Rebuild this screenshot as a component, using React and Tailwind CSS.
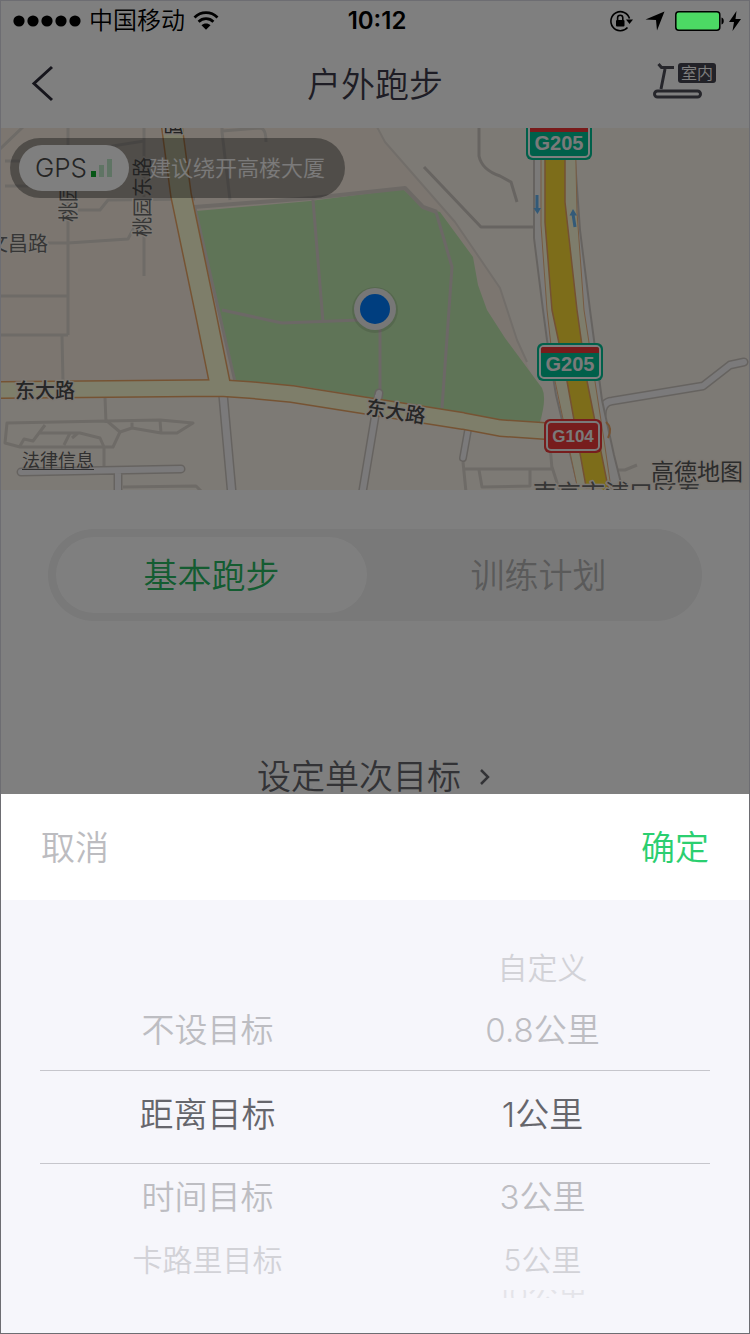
import React, { useState } from "react";

const MODES = ["基本跑步", "训练计划"];

// one entry per wheel slot, the slot's look comes from its position
const GOALS = ["", "不设目标", "距离目标", "时间目标", "卡路里目标", ""];
const VALUES = ["自定义", "0.8公里", "1公里", "3公里", "5公里", "10公里"];

const SLOTS = [
  "h-11 text-[30px] text-[#d2d2d7]",
  "h-20 text-[33px] text-[#bdbdc2]",
  "h-[94px] border-y border-[#c6c6cc] pb-1 text-[34px] text-[#66666c]",
  "h-[66px] text-[33px] text-[#bdbdc2]",
  "h-[60px] text-[30px] text-[#d2d2d7]",
  "h-2 text-[30px] text-[#e4e4e9]",
];

function StatusBar() {
  return (
    <div className="relative z-10 grid h-10 grid-cols-3 items-center pr-2 pl-3 text-black">
      <div className="flex items-center gap-2">
        <svg className="h-3 w-[68px]" viewBox="0 0 68 12">
          {[6, 20, 34, 48, 62].map((cx) => (
            <circle key={cx} cx={cx} cy="6" r="5.6" />
          ))}
        </svg>
        <span className="text-[24px] leading-none">中国移动</span>
        <svg className="h-5 w-[26px]" viewBox="0 0 26 20" fill="none" stroke="currentColor" strokeWidth="2.8">
          <path d="M1.500 6.500C8 .1 18 .1 24.500 6.500M5.600 10.700c4.200-4 10.600-4 14.800 0" />
          <path d="M8.500 14.300c2.400-2.400 6.600-2.400 9 0L13 18.800z" fill="currentColor" stroke="none" />
        </svg>
      </div>
      <div className="text-center text-[24px] leading-none font-semibold">10:12</div>
      <div className="flex items-center justify-end">
        <svg className="mr-3 h-6 w-6" viewBox="0 0 24 24" fill="none" stroke="currentColor" strokeWidth="1.6">
          <path d="M20.500 9.500A9.500 9.500 0 1 0 18.500 18.500" />
          <path d="M17 10.500h7L20.500 15z" fill="currentColor" stroke="none" />
          <rect x="7" y="11" width="8.500" height="6.500" rx="1" fill="currentColor" stroke="none" />
          <path d="M8.600 11V8.800a2.600 2.600 0 0 1 5.200 0V11" />
        </svg>
        <svg className="mr-2.5 h-5 w-5" viewBox="0 0 20 20" fill="currentColor">
          <path d="M19.500 .5 12 19.500l-1-10.500L.5 8.500z" />
        </svg>
        <svg className="h-5 w-[50px]" viewBox="0 0 50 20">
          <rect x=".8" y=".8" width="44" height="18.400" rx="3" fill="#4cd964" stroke="#000" strokeWidth="1.500" />
          <path d="M46.500 6.500c3 .6 3 6.400 0 7z" />
        </svg>
        <svg className="ml-1 h-5 w-3" viewBox="0 0 12 20" fill="currentColor">
          <path d="M7.500 0 0 11h5L3.500 20 12 8H6.500z" />
        </svg>
      </div>
    </div>
  );
}

function NavBar() {
  return (
    <header className="grid h-[87px] grid-cols-3 items-center px-6">
      <button type="button" aria-label="返回" className="justify-self-start pb-1">
        <svg className="h-10 w-10" viewBox="0 0 40 40" fill="none" stroke="#2c2b38" strokeWidth="3">
          <path d="M27 4 9 20.500 27 37" />
        </svg>
      </button>
      <h1 className="text-center text-[34px] leading-none text-[#3c3a4a]">户外跑步</h1>
      <button type="button" className="justify-self-end pr-2 pb-2">
        <svg className="h-9 w-16" viewBox="0 0 64 36">
          <g fill="none" stroke="#4c4c57" strokeWidth="3">
            <path d="M5.500 1 8.500 4.500H21M12 6 8 26" />
            <rect x="1.500" y="28" width="46" height="6" rx="3" />
          </g>
          <rect x="25" y="0" width="38" height="20" rx="3" fill="#444450" />
          <text x="28" y="16" className="text-[16px]" fill="#fff">室内</text>
        </svg>
      </button>
    </header>
  );
}

function G205({ x, y }) {
  return (
    <g transform={`translate(${x} ${y})`}>
      <rect width="66" height="38" rx="6" fill="#00c094" />
      <rect x="3" y="3" width="60" height="32" rx="4" fill="none" stroke="#fff" strokeWidth="2" />
      <path d="M4 10V6q0-2 2-2h54q2 0 2 2v4z" fill="#f03636" />
      <text x="33" y="28" textAnchor="middle" className="text-[20px] font-bold" fill="#f4f4f4">G205</text>
    </g>
  );
}

function Street({ d, w }) {
  return (
    <>
      <path d={d} stroke="#cdc7c1" strokeWidth={w + 3} strokeLinecap="round" />
      <path d={d} stroke="#f6f5f6" strokeWidth={w} strokeLinecap="round" />
    </>
  );
}

function MapView() {
  const northRoad = "M171 120 181 195 205 310 221 389";
  const eastRoad = "M-5 390 220 388 250 390 292 394 368 406 463 421 500 428 545 431 602 431";
  return (
    <svg
      className="block h-full w-full font-['Liberation_Sans','Noto_Sans_CJK_SC',sans-serif] font-normal"
      viewBox="1 128 748 362"
      preserveAspectRatio="xMidYMid slice"
      fill="none"
      strokeLinejoin="round"
    >
      <path d="M0 120h760v380H0z" fill="#f8ede1" />
      <path d="M377 120v10l8 12 70 80 45 66 17 52 25 60V425l-10 75h230V120z" fill="#fbf4ea" />
      <path d="M377 127l8 15 70 80 45 66 17 52 10 22" stroke="#e4ddd4" strokeWidth="2" />
      <path d="M0 396h220l70 4 170 28 90 12v60H0z" fill="#fbf4ea" />

      <g stroke="#dcd6ce" strokeWidth="3">
        <path d="M0 149 23 127M68 120V335M0 296H68M0 335H68M62 336l1 46M144 120V276M105 397l1 26" />
        <path d="M5 161H80M5 186H70M78 210H100L108 200 195 199M48 243H68L128 239 136 224" />
        <path d="M222 120V132L230 200M222 131 260 128Q266 128 266 142M100 148 144 141" />
        <path d="M7 423 107 421 120 432 113 447H20L5 443zM45 425 33 441 24 439 20 446M38 433H80L100 438 104 447V467M70 433 64 445M72 438 78 433" />
        <path d="M107 421 160 420 193 423 177 433 161 433 132 428 120 432M132 421V428M160 420 161 433" />
        <path d="M123 487 196 486 202 492M463 462 466 492M463 469H552L550 445M552 467 560 492M479 470 482 487 530 486V470" />
        <path d="M424 167 481 227H534M479 120V156Q482 170 500 176L511 182 517 202" stroke="#cfc9c2" />
        <path d="M615 470H625L637 465" />
      </g>

      <path
        d="M196 211 310 201 403 189 423 207 440 212 473 257 478 285 487 310 505 338 542 388Q547 398 540 422L500 420 373 398 300 386 235 382z"
        fill="#bfe8ae"
      />
      <path d="M194 207 312 198 405 188 423 207 437 212" stroke="#dad3cb" strokeWidth="4" />
      <path d="M195 208 235 382" stroke="#dbd3cd" strokeWidth="3" />
      <path d="M313 200 323 322M222 310 282 323 360 320M436 212 452 267 442 408M380 320V392" stroke="#d8d0cc" strokeWidth="3" />

      <Street d="M223 394 232 495" w={7} />
      <Street d="M379 393 362 495" w={6} />
      <Street d="M468 430 463 458" w={5} />
      <Street d="M21 472 181 469M118 474V495" w={6} />

      <path d={eastRoad} stroke="#eca766" strokeWidth="18" />
      <path d={northRoad} stroke="#eca766" strokeWidth="22" />
      <path d={eastRoad} stroke="#fcfcd4" strokeWidth="15" />
      <path d={northRoad} stroke="#fcfcd4" strokeWidth="19" />
      <path d="M376 411 378 395" stroke="#f6f5f6" strokeWidth="6" />

      <Street d="M602 415Q602 402 612 401L703 386 730 365 744 362" w={6} />
      <path
        d="M534 120V238L543 310 547 340 556 395 580 495H624L614 455 602 400 590 310 580 230 575 160V120z"
        fill="#f6f4f2"
        stroke="#cdc7c1"
        strokeWidth="2"
      />
      <path d="M541 120V225L547 310 555 381 579 495H612L604 440 584 310 577 212 575 120z" fill="#fcfad8" stroke="#eeb684" strokeWidth="1" />
      <path d="M545 120V222L552 310 567 381 587 492H609L587 381 577 310 565 202V120z" fill="#fbda35" stroke="#e8a266" strokeWidth="1.500" />
      <path d="M606 422Q613 428 608 438" stroke="#eca766" strokeWidth="2" />

      <g stroke="#66b4f0" strokeWidth="3">
        <path d="M537 195V210M575 227 573 214" />
        <path d="M533.500 208h7.500L537.500 214zM569.500 215.500h7.500L573 209z" fill="#66b4f0" stroke="none" />
      </g>

      <G205 x={526} y={122} />
      <G205 x={537} y={343} />
      <rect x="544" y="419" width="58" height="34" rx="6" fill="#ee3a3a" />
      <rect x="547" y="422" width="52" height="28" rx="4" stroke="#f4f4f4" strokeWidth="2" />
      <text x="573" y="442" textAnchor="middle" className="text-[17px] font-bold" fill="#f4f4f4">G104</text>

      <g className="text-[20px]" fill="#6c6c6c" stroke="#f8f0e6" strokeWidth="3" paintOrder="stroke">
        <text transform="translate(76 222) rotate(-90)">桃园路</text>
        <text transform="translate(150 237) rotate(-90)">桃园东路</text>
        <text x="-12" y="251">文昌路</text>
        <text transform="translate(182 135) rotate(-90)" fill="#444">路</text>
        <g className="font-medium" fill="#4c4c4c">
          <text x="15" y="398">东大路</text>
          <text transform="translate(365 414) rotate(9)">东大路</text>
        </g>
        <text x="533" y="502" className="text-[24px]">南京市浦口区泰</text>
        <text x="651" y="480" className="text-[23px]" fill="#585858">高德地图</text>
      </g>

      <circle cx="375" cy="310" r="23" fill="#000" fillOpacity=".1" />
      <circle cx="375" cy="309" r="21" fill="#eee" />
      <circle cx="375" cy="309" r="15" fill="#007cff" />
    </svg>
  );
}

function GpsTip() {
  return (
    <div className="absolute top-[10px] left-[9px] flex h-[60px] items-center gap-5 rounded-full bg-black/35 pr-5 pl-[9px]">
      <div className="flex h-[46px] w-[110px] items-center justify-center gap-1 rounded-full bg-white text-[#4a4a4a]">
        <span className="text-[26px] leading-none font-light">GPS</span>
        <svg className="h-5 w-[22px]" viewBox="0 0 22 20">
          <path d="M0 13h5v6H0z" fill="#0dac2c" />
          <path d="M8 7h5v12H8zM16 1h5v18h-5z" fill="#bfe8c8" />
        </svg>
      </div>
      <span className="text-[22px] leading-none text-white/90">建议绕开高楼大厦</span>
    </div>
  );
}

function Wheel({ label, items, value, onPick }) {
  return (
    <ul role="listbox" aria-label={label}>
      {items.map((item, i) => (
        <li key={i} role="option" aria-selected={item === value} className={`flex items-center justify-center overflow-hidden leading-none ${SLOTS[i]}`}>
          {item ? (
            <button type="button" onClick={() => onPick(item)}>
              {item}
            </button>
          ) : null}
        </li>
      ))}
    </ul>
  );
}

export default function App() {
  const [mode, setMode] = useState(MODES[0]);
  const [goal, setGoal] = useState("距离目标");
  const [distance, setDistance] = useState("1公里");

  return (
    <div className="flex min-h-screen flex-col overflow-hidden border border-[#6d6d72] bg-[#f6f6fb] font-['Inter','Noto_Sans_CJK_SC',sans-serif] font-[350]">
      <div className="relative bg-white">
        <StatusBar />
        <NavBar />

        <section className="relative h-[362px] overflow-hidden">
          <MapView />
          <GpsTip />
          <a href="#legal" className="absolute bottom-4 left-[21px] text-[18px] font-normal text-[#606060] underline underline-offset-2">
            法律信息
          </a>
        </section>

        <main className="flex flex-col items-center px-[47px] pt-[39px]">
          <div className="grid w-full grid-cols-2 rounded-full bg-[#f2f2f2] p-2">
            {MODES.map((name) => (
              <button
                key={name}
                type="button"
                aria-pressed={name === mode}
                onClick={() => setMode(name)}
                className={`h-[76px] rounded-full pt-0.5 text-[34px] leading-none ${
                  name === mode ? "mr-2 bg-white text-[#28b863]" : "pl-2 text-[#b4b4b4]"
                }`}
              >
                {name}
              </button>
            ))}
          </div>

          <button type="button" className="mt-[138px] flex items-center gap-4 pt-px text-[34px] leading-[34px] text-[#66676d]">
            设定单次目标
            <svg className="h-5 w-4" viewBox="0 0 16 20" fill="none" stroke="currentColor" strokeWidth="2.500">
              <path d="m4 3 7 7-7 7" />
            </svg>
          </button>
        </main>

        <div className="absolute inset-0 bg-black/50" />
      </div>

      <div className="flex h-[106px] items-center justify-between bg-white px-10 pt-0.5 text-[34px] leading-none">
        <button type="button" className="text-[#bcbcc0]">取消</button>
        <button type="button" className="text-[#2bcf70]">确定</button>
      </div>

      <div className="mx-[39px] grid grid-cols-2 pt-[46px]">
        <Wheel label="目标类型" items={GOALS} value={goal} onPick={setGoal} />
        <Wheel label="目标距离" items={VALUES} value={distance} onPick={setDistance} />
      </div>
    </div>
  );
}
